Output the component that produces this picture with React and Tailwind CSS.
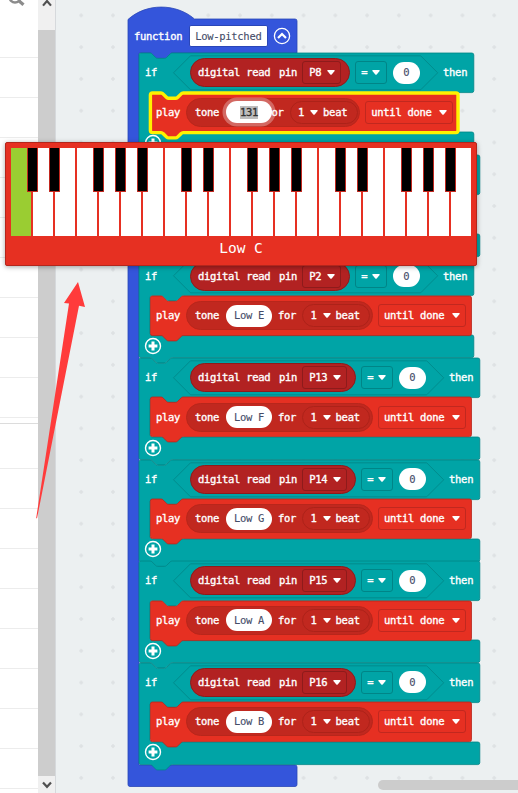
import React from "react";

const NOTCH =
  "c1 0 1.5 .3 2 .9 l3.7 3.6 c.6 .6 1 .8 1.9 .8 h7 c.9 0 1.3 -.2 1.9 -.8 l3.7 -3.6 c.5 -.6 1 -.9 2 -.9";
const BUMP =
  "c-1 0 -1.5 .3 -2 .9 l-3.7 3.6 c-.6 .6 -1 .8 -1.9 .8 h-7 c-.9 0 -1.3 -.2 -1.9 -.8 l-3.7 -3.6 c-.5 -.6 -1 -.9 -2 -.9";

const ifPath = (w) =>
  `M0 2 Q0 0 2 0 H11 ${NOTCH} H${w - 2} q2 0 2 2 V37.6 q0 2 -2 2 H44.2 ${BUMP} H13 q-2 0 -2 2 V77 q0 2 2 2 H${w - 2} q2 0 2 2 V99.6 q0 2 -2 2 H33.2 ${BUMP} H2 q-2 0 -2 -2 Z`;

const playPath = (w) =>
  `M0.4 2 Q0.4 0 2.4 0 H11 ${NOTCH} H${w - 2} q2 0 2 2 V37.6 q0 2 -2 2 H33.2 ${BUMP} H2.4 q-2 0 -2 -2 Z`;

function Caret({ className = "" }) {
  return (
    <svg className={`h-[5px] w-[8px] shrink-0 ${className}`} viewBox="0 0 8 5">
      <path d="M1 0h6q1.1.1.6 1L4.7 4.4q-.7.7-1.4 0L.4 1Q-.1.1 1 0Z" fill="#fff" />
    </svg>
  );
}

function PlusButton() {
  return (
    <svg className="block h-[18px] w-[18px]" viewBox="0 0 18 18">
      <circle cx="9" cy="9" r="7.5" fill="none" stroke="#fff" strokeWidth="1.4" />
      <path d="M9 4.6v8.8M4.6 9h8.8" stroke="#fff" strokeWidth="3" />
    </svg>
  );
}

function PlayRow({ tone, selected }) {
  const w = selected ? 308 : 321.5;
  return (
    <div className="relative ml-[11px] h-[39.6px]">
      <svg className="absolute left-0 top-0 h-[46px] w-[330px] overflow-visible">
        <path
          d={playPath(w)}
          fill="#e63022"
          stroke={selected ? "#fff200" : "#b8261b"}
          strokeWidth={selected ? 3.4 : 0.8}
        />
      </svg>
      <div className="relative flex h-full items-center pl-[6px]">
        <span className="w-[30.3px] shrink-0">play</span>
        <div
          className={`flex h-[29px] shrink-0 items-center rounded-full border border-[#b8261b] bg-[#c1281f] pl-[7.7px] ${
            selected ? "w-[174px]" : "w-[186.7px]"
          }`}
        >
          <span className="w-[31px] shrink-0">tone</span>
          {selected ? (
            <div className="z-10 flex h-[22px] w-[46px] shrink-0 items-center justify-center rounded-full bg-white text-[#333] ring-[3.5px] ring-white/30">
              <span className="bg-[#bdbdbd] leading-[13px]">131</span>
            </div>
          ) : (
            <div className="flex h-[22px] w-[46px] shrink-0 items-center justify-center rounded-full bg-white text-[#454c68] [-webkit-text-stroke:0.1px]">
              {tone}
            </div>
          )}
          <span className={`shrink-0 ${selected ? "-ml-[6.5px]" : "ml-[6px]"}`}>for</span>
          <div className="ml-[6px] flex h-[23px] w-[68px] shrink-0 items-center rounded-full border border-[#ad2219] pl-[7.5px]">
            <span>1</span>
            <Caret className="ml-[6px]" />
            <span className="ml-[5px]">beat</span>
          </div>
        </div>
        <div className="ml-[5px] flex h-[23px] w-[88px] shrink-0 items-center rounded-[3px] border border-[#c1281f] pl-[5px]">
          <span>until done</span>
          <Caret className="ml-[7.5px]" />
        </div>
      </div>
    </div>
  );
}

function IfBlock({ pin, tone, selected, narrow, covered }) {
  const w = narrow ? 334.8 : 340.8;
  const d = narrow ? -6 : 0;
  return (
    <div className="relative h-[101.6px] shrink-0">
      <svg className="absolute left-0 top-0 h-[110px] w-[345px] overflow-visible">
        <path d={ifPath(w)} fill="#00a4a6" stroke="#008587" strokeWidth="0.8" />
        <path
          d={`M34.5 19.8 L51.5 2.8 H${287.7 + d} L${304.7 + d} 19.8 L${287.7 + d} 36.8 H51.5 Z`}
          fill="none"
          stroke="#008587"
          strokeWidth="0.8"
        />
      </svg>
      {!covered && (
        <>
          <div className="relative flex h-[39.4px] items-center pl-[6px]">
            <span className="w-[44.7px] shrink-0">if</span>
            <div
              className={`flex h-[29px] shrink-0 items-center rounded-full border border-[#8e1b1b] bg-[#b22222] pl-[7.3px] ${
                narrow ? "w-[160px]" : "w-[166px]"
              }`}
            >
              <span className="w-[81px] shrink-0">digital read</span>
              <span className="w-[23.3px] shrink-0">pin</span>
              <div
                className={`flex h-[23px] shrink-0 items-center justify-between rounded-[3px] border border-[#8e1b1b] pl-[6px] pr-[5px] ${
                  narrow ? "w-[38.5px]" : "w-[44.5px]"
                }`}
              >
                <span>{pin}</span>
                <Caret />
              </div>
            </div>
            <div className="ml-[5px] flex h-[23px] w-[32px] shrink-0 items-center justify-between rounded-[3px] border border-[#008587] px-[5.5px]">
              <span>=</span>
              <Caret />
            </div>
            <div className="ml-[6px] flex h-[22px] w-[27.4px] shrink-0 items-center justify-center rounded-full bg-white text-[#454c68] [-webkit-text-stroke:0.1px]">
              0
            </div>
            <span className="ml-[23px]">then</span>
          </div>
          <PlayRow tone={tone} selected={selected} />
          <div className="relative pl-[5.4px] pt-[1.6px]">
            <PlusButton />
          </div>
        </>
      )}
    </div>
  );
}

const BLOCKS = [
  { pin: "P8", selected: true, narrow: true },
  { covered: true },
  { pin: "P2", tone: "Low E", narrow: true },
  { pin: "P13", tone: "Low F" },
  { pin: "P14", tone: "Low G" },
  { pin: "P15", tone: "Low A" },
  { pin: "P16", tone: "Low B" },
];

function FunctionBlock() {
  return (
    <div className="absolute left-[72px] top-[7px] flex w-[352px] flex-col whitespace-nowrap text-[10.5px] leading-[15px] tracking-[-0.3px] text-white [-webkit-text-stroke:0.35px]">
      <svg className="absolute left-0 top-0 h-[782px] w-[170px] overflow-visible">
        <path
          d={`M0 12.5 C18 -4 48 -4 66.5 12 H167 q2 0 2 2 V46 H44.2 ${BUMP} H11 V758 H167 q2 0 2 2 V777.5 q0 2 -2 2 H2 q-2 0 -2 -2 Z`}
          fill="#3455db"
          stroke="#2a46b8"
          strokeWidth="0.8"
        />
      </svg>
      <div className="relative flex h-[46.2px] shrink-0 items-center pl-[6px] pt-[12px]">
        <span className="w-[55.2px] shrink-0">function</span>
        <div className="flex h-[22px] w-[79px] items-center rounded-[2px] border border-[#2a46b8] bg-white pl-[5px] text-[#454c68] [-webkit-text-stroke:0.1px]">
          Low-pitched
        </div>
        <svg className="ml-[5.3px] h-[18px] w-[18px]" viewBox="0 0 18 18">
          <circle cx="9" cy="9" r="7.6" fill="none" stroke="#fff" strokeWidth="1.3" />
          <path d="M5 11l4-4 4 4" fill="none" stroke="#fff" strokeWidth="2.2" />
        </svg>
      </div>
      <div className="relative ml-[11px] flex flex-col">
        <svg className="absolute left-0 top-0 h-[8px] w-[50px]">
          <rect x="8" y="0" width="28" height="8" fill="#3455db" />
        </svg>
        {BLOCKS.map((b, i) => (
          <IfBlock key={i} {...b} />
        ))}
      </div>
    </div>
  );
}

const BLACK_AFTER = [1, 2, 4, 5, 6, 8, 9, 11, 12, 13, 15, 16, 18, 19, 20];

function Piano() {
  return (
    <div className="absolute left-[5px] top-[142px] flex h-[124px] w-[472px] flex-col rounded-[2px] border border-[#b3261c] bg-[#e63022] px-[5px] pt-[5px] shadow-[0_1px_5px_rgba(0,0,0,0.35)]">
      <div className="flex h-[88px] shrink-0">
        {Array.from({ length: 21 }, (_, i) => (
          <div
            key={i}
            className={`relative h-full shrink-0 border-[#e63022] ${
              i === 0 ? "w-[22px] border-r-2 bg-[#9acd32]" : i === 20 ? "w-[20px] bg-white" : "w-[22px] border-r-2 bg-white"
            }`}
          >
            {BLACK_AFTER.includes(i + 1) && (
              <div className="absolute -right-[7px] top-0 z-10 h-[44px] w-[11px] rounded-b-[1px] border border-t-0 border-[#c1281f] bg-black" />
            )}
          </div>
        ))}
      </div>
      <div className="flex flex-1 items-center justify-center pb-[5px] text-[14.5px] leading-none text-white">
        Low C
      </div>
    </div>
  );
}

function Sidebar() {
  return (
    <div className="flex w-[38px] shrink-0 flex-col overflow-hidden bg-white">
      <div className="h-[58px] shrink-0 border-b border-[#ececec]">
        <svg className="block h-[10px] w-[38px]" viewBox="0 0 38 10">
          <circle cx="15" cy="-3" r="5.5" fill="none" stroke="#8c8c8c" strokeWidth="2.4" />
          <path d="M18.5 .5l5 4.3" stroke="#8c8c8c" strokeWidth="3.2" />
        </svg>
      </div>
      {Array.from({ length: 9 }, (_, i) => (
        <div key={i} className="h-[40px] shrink-0 border-b border-[#ececec]" />
      ))}
      <div className="h-[6px] shrink-0 border-b border-[#dcdcdc]" />
      <div className="h-[45px] shrink-0 border-b border-[#ececec]" />
      {Array.from({ length: 8 }, (_, i) => (
        <div key={i} className="h-[40px] shrink-0 border-b border-[#ececec]" />
      ))}
    </div>
  );
}

function ScrollTrack() {
  return (
    <div className="flex w-[18px] shrink-0 flex-col border-r border-[#d6d9dc] bg-[#f0f0f0]">
      <div className="flex h-[30px] justify-center">
        <svg className="h-[9px] w-[10px]" viewBox="0 0 10 9">
          <path d="M1 5.6L5 1l4 4.6" fill="none" stroke="#505050" strokeWidth="2.2" />
        </svg>
      </div>
      <div className="h-[746px] bg-[#cdcdcd]" />
      <div className="flex flex-1 items-center justify-center">
        <svg className="h-[8px] w-[10px]" viewBox="0 0 10 8">
          <path d="M1 1.5L5 5.8l4-4.3" fill="none" stroke="#505050" strokeWidth="2.2" />
        </svg>
      </div>
    </div>
  );
}

export default function App() {
  return (
    <div className="relative flex h-[793px] w-[518px] overflow-hidden bg-white font-['DejaVu_Sans_Mono',monospace]">
      <Sidebar />
      <ScrollTrack />
      <div className="relative flex-1 overflow-hidden bg-[#ecf0f1]">
        <svg className="absolute inset-0 h-full w-full">
          <defs>
            <pattern id="grid" x="9.3" y="-0.5" width="31.77" height="31.77" patternUnits="userSpaceOnUse">
              <path d="M15.9 13.9v4M13.9 15.9h4" stroke="#dde1e3" strokeWidth="1.5" />
            </pattern>
          </defs>
          <rect width="100%" height="100%" fill="url(#grid)" />
        </svg>
        <FunctionBlock />
        <div className="absolute left-[322px] top-[780px] h-[10px] w-[160px] rounded-full bg-[#cccccc]" />
      </div>
      <Piano />
      <svg className="absolute left-[30px] top-[276px] h-[250px] w-[70px]" viewBox="30 276 70 250">
        <path d="M78 282L85 307L79 305.8L37 518.5L36.2 518L69 303.5L64 303Z" fill="#ff3b3b" />
      </svg>
    </div>
  );
}
